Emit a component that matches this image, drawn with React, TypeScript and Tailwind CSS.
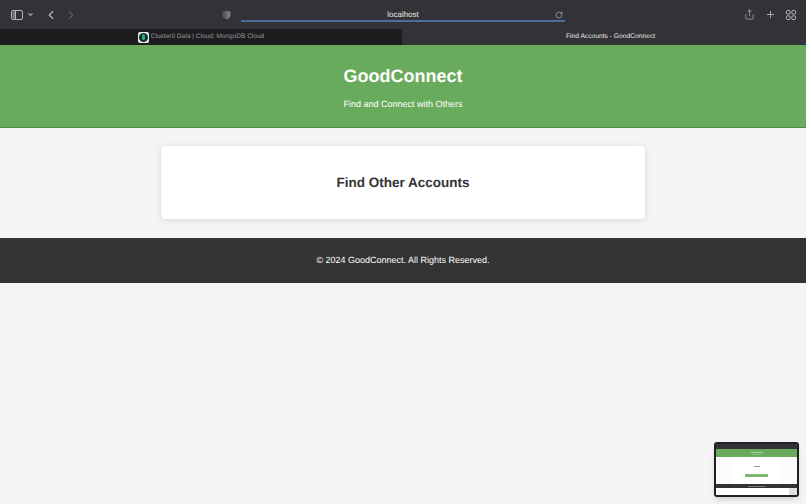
import React from "react";
import { ChevronDown, ChevronLeft, ChevronRight, Plus, RotateCw, Share } from "lucide-react";

const SidebarIcon = () => (
  <svg width="12" height="10" viewBox="0 0 12 10" fill="none" stroke="#b4b4b6" strokeWidth="1">
    <rect x="0.5" y="0.5" width="11" height="9" rx="1.5" />
    <rect x="1.5" y="1.5" width="3" height="7" fill="#b4b4b6" stroke="none" opacity="0.55" />
    <path d="M4.5 0.5v9" />
  </svg>
);

const ShieldIcon = () => (
  <svg width="9" height="10" viewBox="0 0 9 10">
    <path d="M4.5 0.5C6 1.3 7.3 1.5 8.5 1.6V5c0 2.2-1.8 3.7-4 4.6C2.300 8.700.5 7.200.5 5V1.600C1.700 1.500 3 1.300 4.500.5Z" fill="#5c5c60" />
    <path d="M4.500.5C6 1.300 7.300 1.500 8.500 1.600V5c0 2.200-1.800 3.700-4 4.600Z" fill="#77777b" />
  </svg>
);

const TabsIcon = () => (
  <svg width="10" height="10" viewBox="0 0 10 10" fill="none" stroke="#b4b4b6" strokeWidth="1">
    <rect x="0.500" y="0.500" width="3.600" height="3.600" rx="0.800" />
    <rect x="5.900" y="0.500" width="3.600" height="3.600" rx="0.800" />
    <rect x="0.500" y="5.900" width="3.600" height="3.600" rx="0.800" />
    <rect x="5.900" y="5.900" width="3.600" height="3.600" rx="0.800" />
  </svg>
);

const MongoIcon = () => (
  <div className="flex h-[11px] w-[11px] items-center justify-center rounded-[2px] bg-[#e8eef0]">
    <div className="flex h-[9px] w-[9px] items-center justify-center rounded-full bg-[#0f2e2a]">
      <div className="h-[6px] w-[3px] rounded-full bg-[#22b573]" />
    </div>
  </div>
);

const Thumbnail = () => (
  <div className="absolute left-[714px] top-[442px] flex h-[55px] w-[85px] flex-col overflow-hidden rounded-[3px] border-2 border-[#202024] bg-white shadow-md">
    <div className="h-[5px] bg-[#333236]" />
    <div className="flex h-[8px] flex-col items-center justify-center gap-[1px] bg-[#69ab5d]">
      <div className="h-px w-[12px] bg-[#a8cda1]" />
      <div className="h-px w-[8px] bg-[#8abd80]" />
    </div>
    <div className="flex h-[27px] flex-col items-center bg-[#fbfbfb] px-[17px]">
      <div className="flex h-full w-full flex-col items-center bg-white pt-[9px]">
        <div className="h-px w-[6px] bg-[#999999]" />
        <div className="mt-[7px] h-[3px] w-[23px] bg-[#7fb874]" />
      </div>
    </div>
    <div className="flex h-[4px] items-center justify-center bg-[#333333]">
      <div className="h-px w-[18px] bg-[#777777]" />
    </div>
    <div className="flex flex-1 justify-end bg-white">
      <div className="h-full w-[8px] bg-[#e2e2e2]" />
    </div>
  </div>
);

export default function App() {
  return (
    <div className="relative flex h-[504px] w-[806px] flex-col overflow-hidden bg-[#f4f4f4] font-['Liberation_Sans',sans-serif] [text-rendering:geometricPrecision]">
      {/* Browser toolbar */}
      <div className="flex h-[29px] items-center bg-[#333236] pl-[11px] pr-[10px]">
        <SidebarIcon />
        <ChevronDown className="ml-[4px] h-[7px] w-[7px] text-[#b4b4b6]" strokeWidth={3.5} />
        <ChevronLeft className="ml-[10px] h-[14px] w-[14px] text-[#b4b4b6]" strokeWidth={2} />
        <ChevronRight className="ml-[6px] h-[14px] w-[14px] text-[#5c5c60]" strokeWidth={2} />
        <div className="ml-[144px]">
          <ShieldIcon />
        </div>
        <div className="ml-[10px] flex h-[14px] w-[324px] items-center border-b-2 border-[#4a6f9e] pt-[2px]">
          <div className="flex-1 pl-[10px] text-center text-[8px] font-medium text-[#e8e8e8]">localhost</div>
          <RotateCw className="mr-[2px] h-[8px] w-[8px] text-[#b4b4b6]" strokeWidth={2} />
        </div>
        <div className="ml-auto flex items-center gap-[10px]">
          <Share className="h-[11px] w-[11px] text-[#b4b4b6]" strokeWidth={1.500} />
          <Plus className="h-[11px] w-[11px] text-[#b4b4b6]" strokeWidth={2} />
          <TabsIcon />
        </div>
      </div>
      {/* Tabs */}
      <div className="flex h-[16px] items-center">
        <div className="flex h-full w-[402px] items-center justify-center gap-[2px] bg-[#1d1d1f]">
          <MongoIcon />
          <span className="text-[6.500px] leading-none text-[#98989b]">Cluster0 Data | Cloud: MongoDB Cloud</span>
        </div>
        <div className="flex h-full flex-1 items-center justify-center bg-[#333236] pl-[13px]">
          <span className="text-[6.700px] font-medium leading-none text-[#ececec]">Find Accounts - GoodConnect</span>
        </div>
      </div>
      {/* Page header */}
      <header className="flex h-[83px] flex-col items-center border-b border-[#4c8a45] bg-[#69ab5d] text-white">
        <h1 className="mt-[19px] text-[18px] font-bold leading-[24px]">GoodConnect</h1>
        <p className="mt-[10px] text-[9px] leading-[12px]">Find and Connect with Others</p>
      </header>
      <main className="flex justify-center pb-[19px] pt-[18px]">
        <div className="flex h-[73px] w-[484px] items-center justify-center rounded-[4px] bg-white pt-[1px] shadow-[0_1px_6px_rgba(0,0,0,0.12)]">
          <h2 className="text-[13.500px] font-bold text-[#333333]">Find Other Accounts</h2>
        </div>
      </main>
      <footer className="flex h-[45px] items-center justify-center bg-[#333333] text-[9px] text-white">
        © 2024 GoodConnect. All Rights Reserved.
      </footer>
      <Thumbnail />
    </div>
  );
}
